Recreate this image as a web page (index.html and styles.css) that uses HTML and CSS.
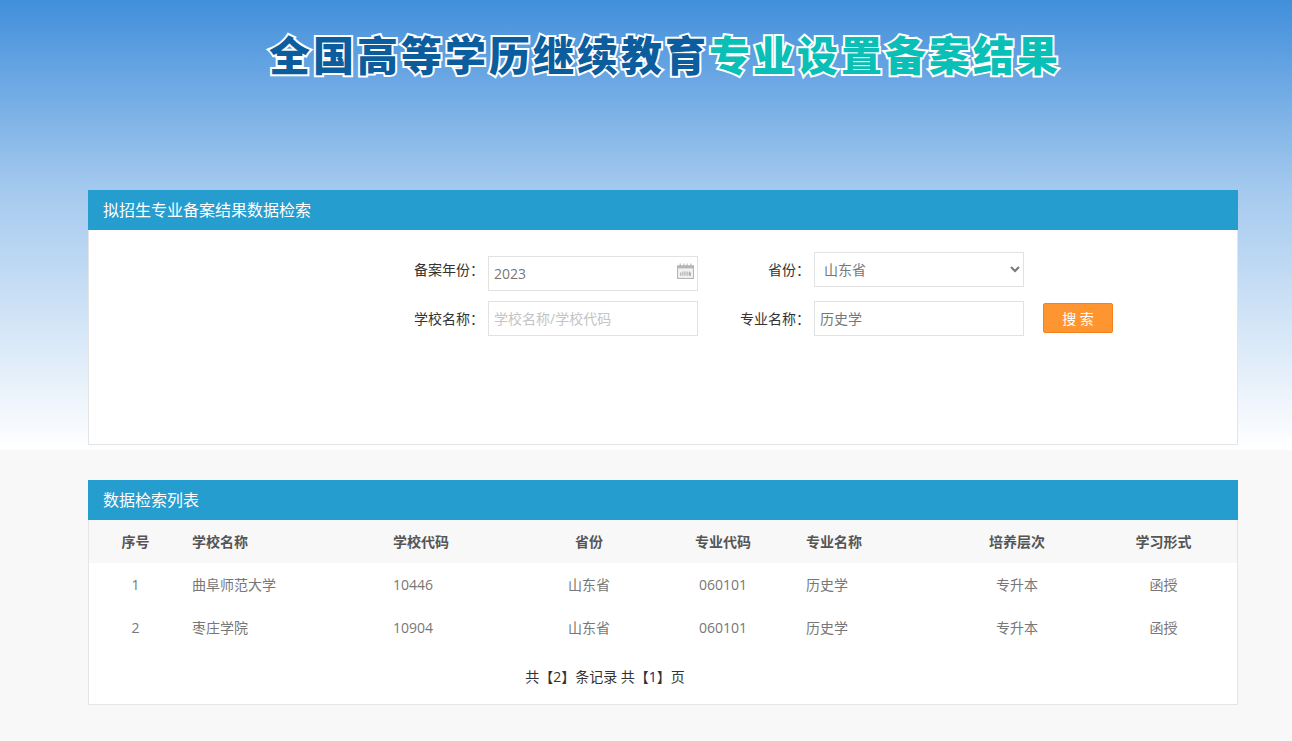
FILE: index.html
```html
<!DOCTYPE html>
<html lang="zh-CN">
<head>
<meta charset="utf-8">
<title>全国高等学历继续教育专业设置备案结果</title>
<link rel="stylesheet" href="styles.css">
</head>
<body>
<div class="sky"></div>
<div class="page">
  <h1 class="title"><span class="title-blue">全国高等学历继续教育</span><span class="title-teal">专业设置备案结果</span></h1>
  <section class="panel search-panel">
    <h2 class="panel-head">拟招生专业备案结果数据检索</h2>
    <div class="panel-body search-body">
      <form class="search-form">
        <label class="lbl">备案年份：</label>
        <div class="field date-field">
          <span class="input date-input">2023</span>
          <svg class="cal" width="17" height="16" viewBox="0 0 16 15">
            <path fill="#b5b5b5" d="M0 2h2.500V0.500h1V2h2.500V0.500h1V2h2V0.500h1V2h2.500V0.500h1V2H16v13H0z"/>
            <path fill="#f2f2f2" d="M1 5h14v9H1z"/>
            <path fill="#a8a8a8" d="M3 9h1v3H3zM5 8h1v4H5zM7 8h1v4H7zM9 8h1v4H9zM11 8h1v4h-1zM13 9h-1v3h1z"/>
          </svg>
        </div>
        <label class="lbl">省份：</label>
        <select class="input select"><option>山东省</option></select>
        <span></span>
        <label class="lbl">学校名称：</label>
        <input class="input" type="text" placeholder="学校名称/学校代码">
        <label class="lbl">专业名称：</label>
        <input class="input" type="text" value="历史学">
        <button class="btn" type="button">搜 索</button>
      </form>
    </div>
  </section>
  <section class="panel list-panel">
    <h2 class="panel-head">数据检索列表</h2>
    <div class="panel-body">
      <table class="tbl">
        <colgroup>
          <col class="c1"><col class="c2"><col class="c3"><col class="c4"><col class="c5"><col class="c6"><col class="c7"><col class="c8">
        </colgroup>
        <thead>
          <tr><th>序号</th><th class="l">学校名称</th><th class="l">学校代码</th><th>省份</th><th>专业代码</th><th class="l">专业名称</th><th>培养层次</th><th>学习形式</th></tr>
        </thead>
        <tbody>
          <tr><td>1</td><td class="l">曲阜师范大学</td><td class="l">10446</td><td>山东省</td><td>060101</td><td class="l">历史学</td><td>专升本</td><td>函授</td></tr>
          <tr><td>2</td><td class="l">枣庄学院</td><td class="l">10904</td><td>山东省</td><td>060101</td><td class="l">历史学</td><td>专升本</td><td>函授</td></tr>
        </tbody>
      </table>
      <p class="pager">共【2】条记录 共【<span class="num">1</span>】页</p>
    </div>
  </section>
</div>
</body>
</html>
```
FILE: styles.css
```css
* { box-sizing: border-box; }
html, body { margin: 0; padding: 0; }
body {
  background: #f8f8f8;
  font-family: "Open Sans", "Noto Sans CJK SC", sans-serif;
  font-size: 14px;
  color: #333;
  height: 741px;
  overflow: hidden;
}
.sky {
  height: 450px;
  background: linear-gradient(to bottom, #418fdb 0%, #a4c9ee 42%, #ffffff 100%);
  margin-bottom: -450px;
}
.page {
  position: relative;
  width: 1150px;
  margin-left: 88px;
}
.title {
  margin: 0;
  height: 190px;
  padding: 22px 0 0 181px;
  font-family: "Noto Sans CJK SC", sans-serif;
  font-size: 41px;
  letter-spacing: 3px;
  line-height: 62px;
  font-weight: 900;
  white-space: nowrap;
}
.title span {
  -webkit-text-stroke: 4px #fff;
  paint-order: stroke fill;
}
.title-blue { color: #0c5d9d; }
.title-teal { color: #0abfb6; }
.panel-head {
  margin: 0;
  height: 40px;
  padding-left: 15px;
  background: #259dcf;
  color: #fff;
  font-size: 16px;
  font-weight: 400;
  line-height: 40px;
}
.panel-body {
  background: #fff;
  border: 1px solid #e5e5e5;
  border-top: 0;
}
.search-body { height: 215px; }
.list-panel { margin-top: 35px; }
.search-form {
  display: grid;
  grid-template-columns: 399px 210px 116px 210px 89px;
  grid-auto-rows: 35px;
  row-gap: 14px;
  padding-top: 22px;
  align-items: start;
}
.search-form .btn { justify-self: end; margin-top: 2px; }
.lbl {
  margin-right: 4px;
  text-align: right;
  font-size: 14px;
  line-height: 35px;
  color: #333;
}
.input {
  display: block;
  width: 210px;
  height: 35px;
  padding: 0 5px 1px;
  background: #fff;
  border: 1px solid #e2e2e2;
  border-radius: 0;
  outline: 0;
  font: 14px "Open Sans", "Noto Sans CJK SC", sans-serif;
  color: #777;
}
.input::placeholder { color: #c4c4c4; opacity: 1; }
.select { padding-left: 5px; }
.date-field { position: relative; margin-top: 4px; }
.date-input { line-height: 33px; }
.cal { position: absolute; right: 4px; top: 7px; }
.btn {
  width: 70px;
  height: 30px;
  padding: 0;
  background: #ff9530;
  border: 1px solid #f5801c;
  border-radius: 2px;
  color: #fff;
  font: 14px "Open Sans", "Noto Sans CJK SC", sans-serif;
}
.tbl {
  width: 1148px;
  border-collapse: collapse;
  table-layout: fixed;
  font-size: 14px;
  color: #777;
}
.c1 { width: 93px; } .c2 { width: 201px; } .c3 { width: 145px; } .c4 { width: 122px; }
.c5 { width: 146px; } .c6 { width: 148px; } .c7 { width: 146px; } .c8 { width: 147px; }
.tbl th, .tbl td {
  height: 43px;
  padding: 0 10px 1px;
  text-align: center;
  vertical-align: middle;
}
.tbl th { padding-bottom: 2px; background: #f8f8f8; color: #555; font-weight: 700; }
.tbl .l { text-align: left; }
.pager {
  margin: 0;
  height: 55px;
  padding-right: 116px;
  text-align: center;
  font-size: 14px;
  line-height: 55px;
  color: #333;
}
.num { color: #1a1a80; }
```
